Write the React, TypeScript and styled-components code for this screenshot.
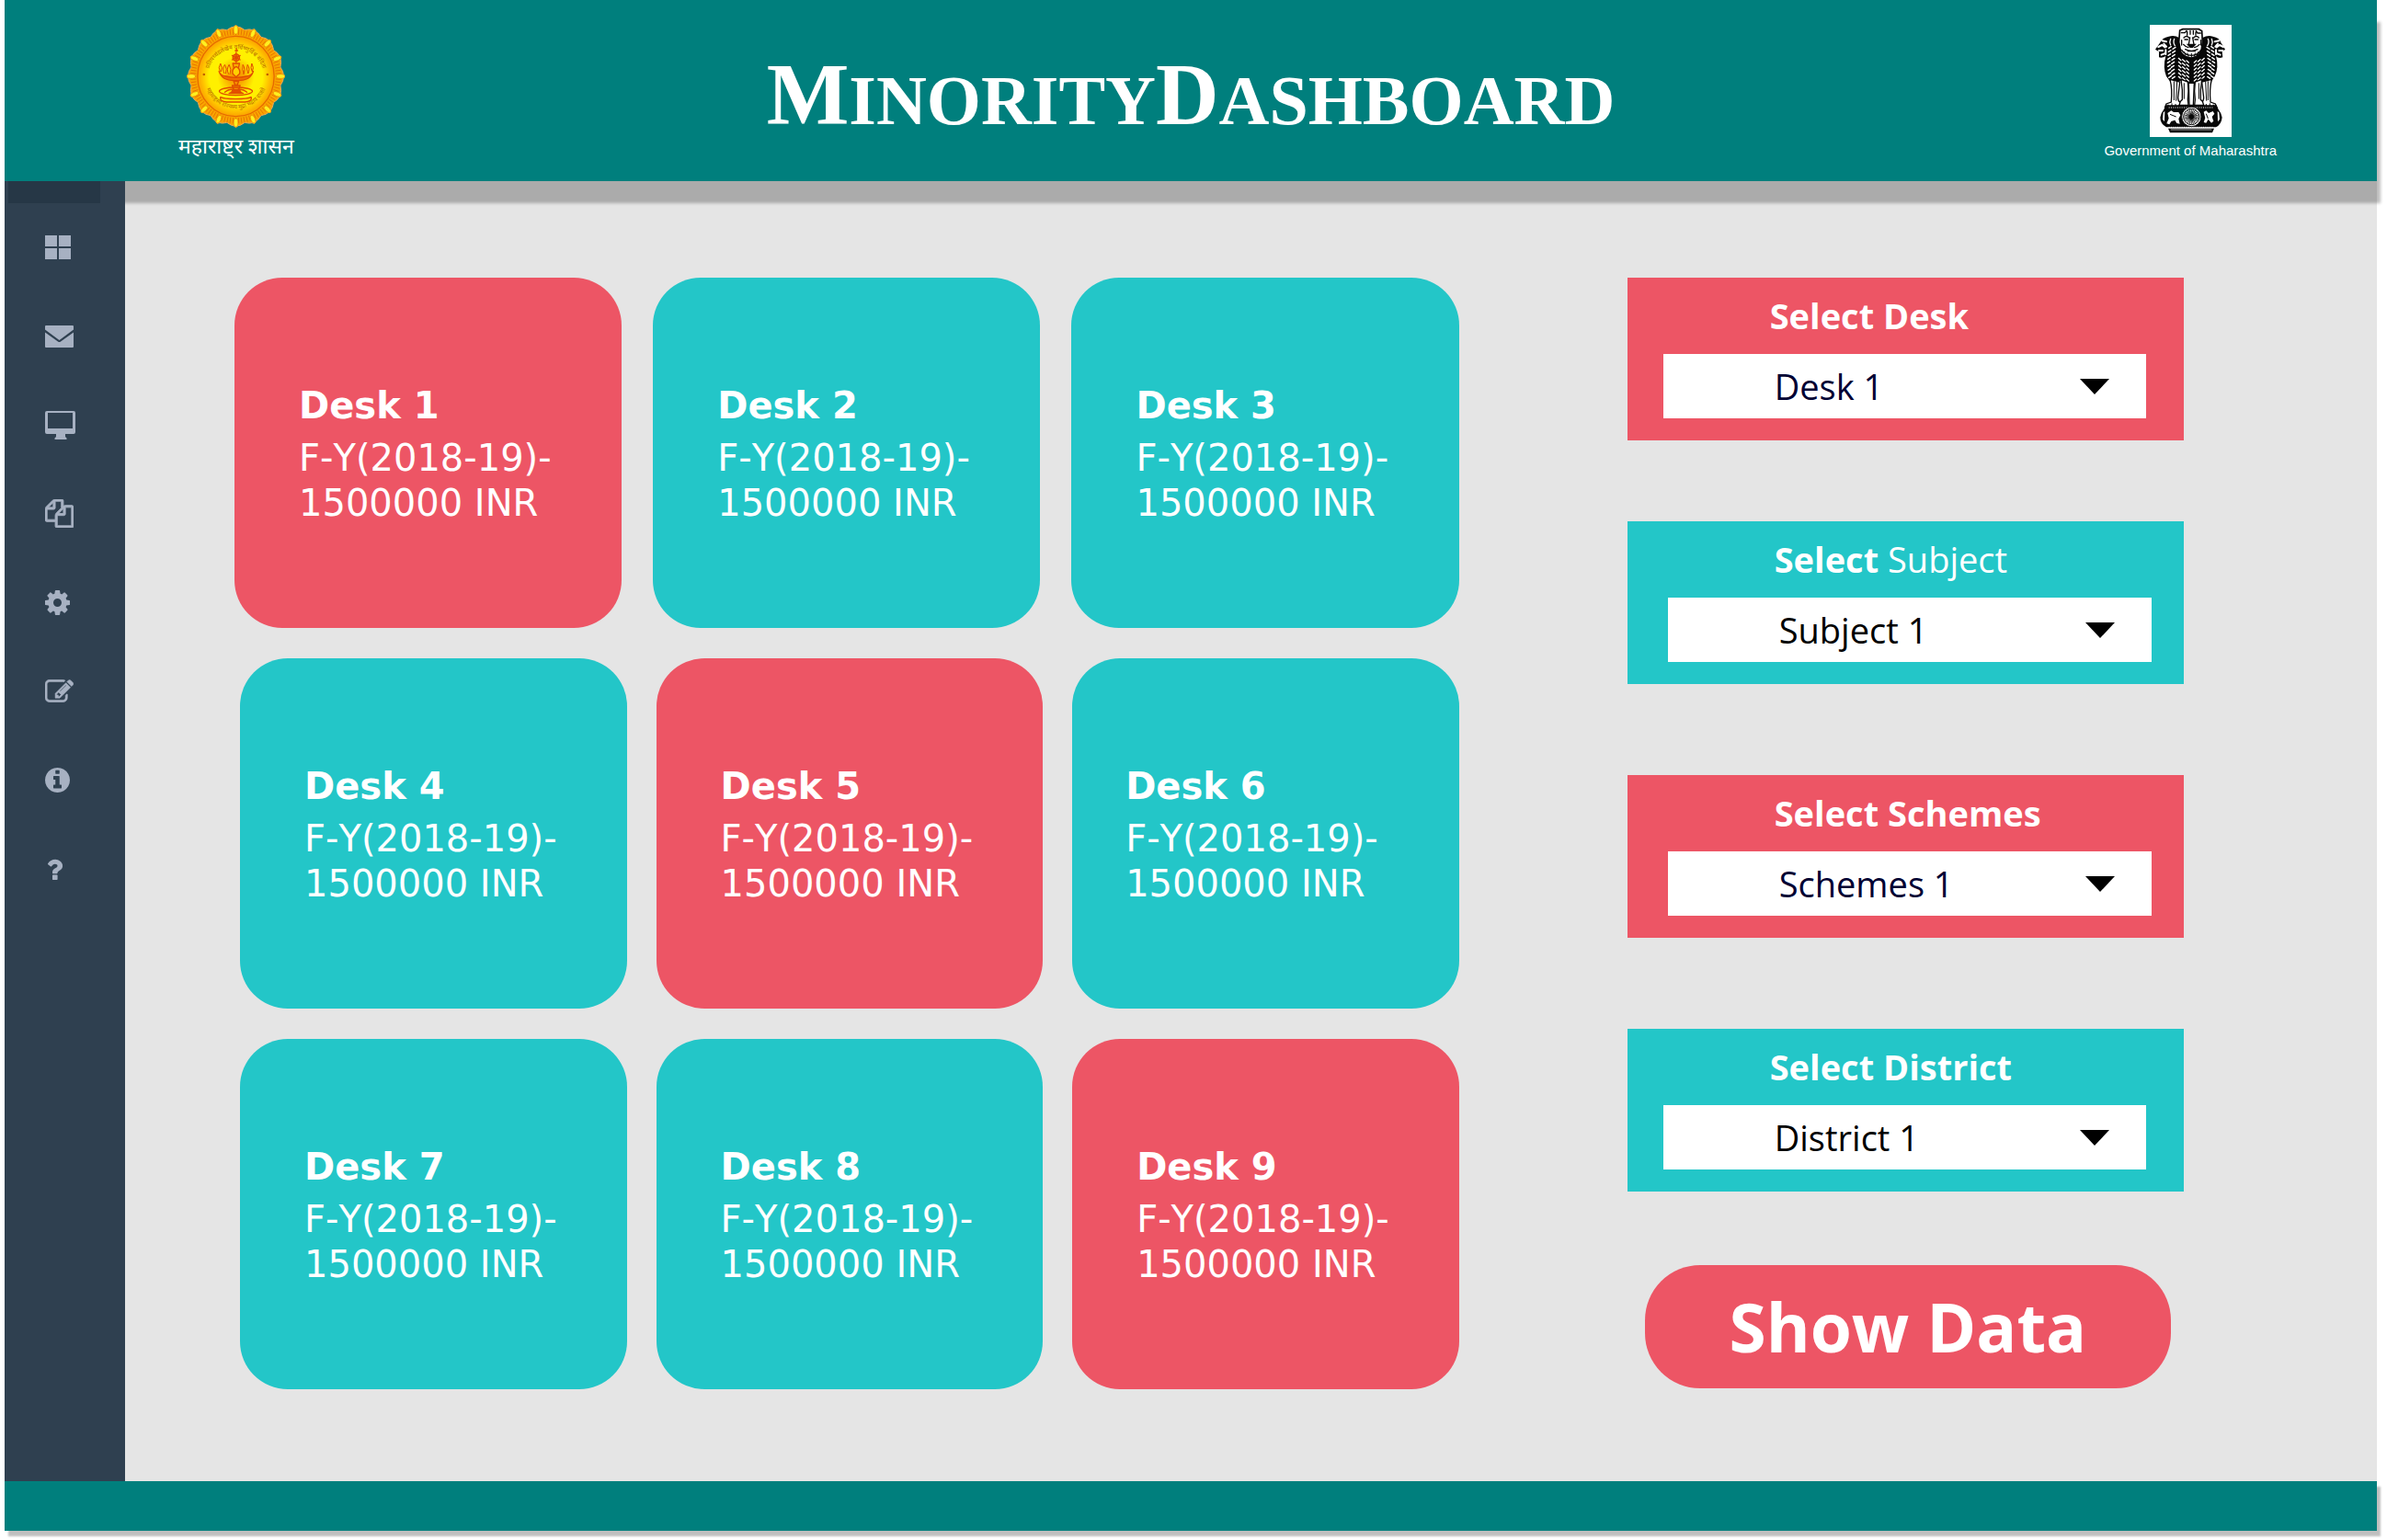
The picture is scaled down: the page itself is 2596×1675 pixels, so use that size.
import React from "react";
import styled, { createGlobalStyle, css } from "styled-components";

const color = {
  teal: "#007f7d",
  navy: "#2f4050",
  navyDark: "#263746",
  coral: "#ed5565",
  aqua: "#23c6c8",
  canvas: "#e5e5e5",
  icon: "#a7b1c2",
};

const humanist = `"Open Sans", "Noto Sans", sans-serif`;

const GlobalStyle = createGlobalStyle`
  *, *::before, *::after { box-sizing: border-box; }
  body { margin: 0; background: #fff; font-family: ${humanist}; }
  h1, h2, p, ul, figure { margin: 0; padding: 0; }
  button, select { font: inherit; border: 0; border-radius: 0; cursor: pointer; }
`;

const Page = styled.div`
  display: grid;
  grid-template-columns: auto minmax(0, 1fr);
  grid-template-rows: auto 1fr auto;
  min-height: 100vh;
  padding: 0 11px 10px 5px;
`;

const Header = styled.header`
  grid-column: 1 / -1;
  position: relative;
  z-index: 1;
  display: grid;
  grid-template-columns: 1fr auto 1fr;
  align-items: start;
  min-height: 197px;
  padding: 27px 109px 0 189px;
  background: ${color.teal};
  box-shadow: 4px 24px 3px rgba(0, 0, 0, 0.25);
  color: #fff;
`;

const Brand = styled.figure<{ $end?: boolean }>`
  display: flex;
  flex-direction: column;
  align-items: center;
  justify-self: ${(p) => (p.$end ? "end" : "start")};
  svg { display: block; }
`;

const MarathiName = styled.figcaption`
  font: 23px/36px "Noto Sans Devanagari", "Noto Sans", "Lohit Devanagari", sans-serif;
  margin-top: 4px;
`;

const StateName = styled.figcaption`
  font: 15px/30px "Liberation Sans", Arial, sans-serif;
`;

const Title = styled.h1`
  /* the two outer columns differ in padding, so the title is pulled to the page's centre */
  margin-right: 80px;
  padding-top: 20px;
  font: bold 76px/112px "Liberation Serif", serif;
  text-transform: uppercase;
  white-space: nowrap;
`;

const TitleWord = styled.span`
  display: inline-block;
  &::first-letter { font-size: 95px; }
`;

const Sidebar = styled.nav`
  position: relative;
  z-index: 2;
  width: 131px;
  background: ${color.navy};
`;

const SidebarCap = styled.div`
  width: 100px;
  height: 24px;
  margin-left: 4px;
  background: ${color.navyDark};
`;

const NavList = styled.ul`
  display: grid;
  grid-auto-rows: 1fr;
  height: 772px;
  list-style: none;
`;

const NavButton = styled.button`
  display: flex;
  align-items: center;
  width: 100%;
  height: 100%;
  padding: 0 0 0 44px;
  background: transparent;
  color: ${color.icon};
`;

const Main = styled.main`
  display: grid;
  grid-template-columns: 11fr 5fr;
  align-items: start;
  gap: 183px;
  padding: 105px 210px 100px 119px;
  background: ${color.canvas};
`;

const Board = styled.section`
  display: grid;
  gap: 33px;
`;

const BoardRow = styled.div<{ $inset?: boolean }>`
  display: grid;
  grid-template-columns: repeat(3, 1fr);
  gap: ${(p) => (p.$inset ? 32 : 34)}px;
  padding-left: ${(p) => (p.$inset ? 6 : 0)}px;
`;

type Tone = "coral" | "aqua";

const DeskCard = styled.article<{ $tone: Tone; $indent: number }>`
  min-height: 381px;
  padding: 115px 16px 111px ${(p) => p.$indent}px;
  border-radius: 52px;
  background: ${(p) => color[p.$tone]};
  color: #fff;
  font: 40px/49px "DejaVu Sans", Verdana, sans-serif;
  font-kerning: none;
`;

const DeskName = styled.h2`
  margin-bottom: 8px;
  font-size: 40px;
  font-weight: bold;
`;

const Filters = styled.form`
  display: flex;
  flex-direction: column;
`;

const FilterPanel = styled.div<{ $tone: Tone; $right?: boolean }>`
  margin-top: 99px;
  padding: 15px 41px 24px 39px;
  background: ${(p) => color[p.$tone]};
  ${(p) => p.$right && css`padding-left: 44px; padding-right: 35px;`}
  &:nth-child(1) { margin-top: 0; }
  &:nth-child(2) { margin-top: 88px; }
`;

const FilterLabel = styled.label`
  display: block;
  margin-bottom: 16px;
  padding-left: 116px;
  color: #fff;
  font-size: 38px;
  font-weight: 700;
  line-height: 52px;
`;

const LightWord = styled.span`
  font-weight: 400;
`;

const SelectWrap = styled.div`
  position: relative;
`;

const Select = styled.select<{ $ink: string }>`
  display: block;
  appearance: none;
  width: 100%;
  height: 70px;
  padding: 0 80px 0 121px;
  background: #fff;
  color: ${(p) => p.$ink};
  font-size: 38px;
`;

const Caret = styled.svg`
  position: absolute;
  top: 27px;
  right: 40px;
  pointer-events: none;
`;

const ShowButton = styled.button`
  margin: 80px 14px 0 19px;
  padding: 16px;
  border-radius: 60px;
  background: ${color.coral};
  color: #fff;
  font-size: 73px;
  font-weight: 700;
  line-height: 102px;
`;

const Footer = styled.footer`
  grid-column: 1 / -1;
  position: relative;
  z-index: 3;
  height: 54px;
  background: ${color.teal};
  box-shadow: 4px 6px 2px rgba(0, 0, 0, 0.25);
`;

const polar = (r: number, deg: number) => {
  const a = (deg * Math.PI) / 180;
  return [160 + r * Math.sin(a), 168 - r * 1.04 * Math.cos(a)];
};

function scallop() {
  const pts: string[] = [];
  for (let i = 0; i < 128; i++) {
    const k = i % 8;
    const r = [160, 155, 154, 151, 148, 151, 154, 155][k];
    pts.push(polar(r, i * 2.8125).map((n) => n.toFixed(1)).join(","));
  }
  return pts.join(" ");
}

function Seal() {
  const petals = Array.from({ length: 16 }, (_, i) => i * 22.5);
  const rays = Array.from({ length: 96 }, (_, i) => i * 3.75);
  return (
    <svg width="107" height="112" viewBox="0 0 320 336" role="img" aria-label="Seal of Maharashtra">
      <defs>
        <radialGradient id="disc">
          <stop offset="0" stopColor="#f08a00" />
          <stop offset="0.2" stopColor="#f9a800" />
          <stop offset="0.48" stopColor="#fff000" />
          <stop offset="0.7" stopColor="#fff000" />
          <stop offset="0.86" stopColor="#ffc400" />
          <stop offset="1" stopColor="#fba100" />
        </radialGradient>
        <path id="arcTop" d="M68 190 A93 97 0 1 1 252 190" />
        <path id="arcBottom" d="M56 180 A105 109 0 0 0 264 180" />
      </defs>
      <polygon points={scallop()} fill="#f9a400" stroke="#e8a860" strokeWidth="3" />
      {rays.map((d) => {
        const [x1, y1] = polar(130, d);
        const [x2, y2] = polar(148, d);
        return <line key={d} x1={x1} y1={y1} x2={x2} y2={y2} stroke="#e56a00" strokeWidth="2.4" />;
      })}
      {petals.map((d) => {
        const [x, y] = polar(146, d);
        return (
          <ellipse key={d} cx={x} cy={y} rx="7" ry="14" fill="#ffef20" stroke="#ea8a00" strokeWidth="2"
            transform={`rotate(${d} ${x} ${y})`} />
        );
      })}
      <ellipse cx="160" cy="168" rx="125" ry="131" fill="url(#disc)" stroke="#e66a00" strokeWidth="4" />
      <g fill="#b86a00" fontSize="19" fontFamily='"Noto Sans Devanagari", "Noto Sans", sans-serif'>
        <text><textPath href="#arcTop" startOffset="50%" textAnchor="middle">प्रतिपच्चंद्रलेखेव वर्धिष्णुर्विश्व वंदिता</textPath></text>
        <text><textPath href="#arcBottom" startOffset="50%" textAnchor="middle">महाराष्ट्रस्य राज्यस्य मुद्रा भद्राय राजते</textPath></text>
      </g>
      <circle cx="56" cy="162" r="4" fill="#c06000" />
      <circle cx="263" cy="162" r="4" fill="#c06000" />
      <g fill="none" stroke="#e04e00" strokeWidth="4" strokeLinecap="round" strokeLinejoin="round">
        <path d="M162 78v8m-4-2h8" />
        <circle cx="161" cy="107" r="11" fill="#f08000" />
        <circle cx="161" cy="107" r="4" fill="#ffe000" />
        <path d="M148 100l26 14M148 114l26-14M161 90v34" />
        <path d="M150 126h22l-4 16h-14z" fill="#f9b000" />
        <path d="M105 152q10 32 56 30q46 2 56-30q-6 14-24 16q-32 8-64 0q-18-2-24-16z" fill="#f07000" />
        <path d="M108 152q-7-12 2-26q8 14 2 26M122 158q-8-14 2-28q9 14 3 28M136 160q-8-15 2-30q9 15 3 30M186 160q-7-15-3-30q10 15 2 30M200 158q-7-14-2-28q10 14 2 28M213 152q-7-12-1-26q9 14 2 26" fill="#ffd800" strokeWidth="3" />
        <path d="M150 160q-4-16 11-24q15 8 11 24l-11 10z" fill="#ffd000" />
        <path d="M153 184h16l-4 12h-8zM148 198h26l-5 14h-16z" fill="#f59000" />
        <path d="M150 212q-2 8-12 12h46q-10-4-12-12" fill="#e45000" />
        <ellipse cx="160" cy="217" rx="54" ry="13" />
        <path d="M124 220q12-10 28-10M196 220q-12-10-28-10" />
        <path d="M110 236q-4 14 20 16h60q24-2 20-16q-12 6-50 6t-50-6z" fill="#ffe000" />
      </g>
    </svg>
  );
}

function Emblem() {
  const rows = Array.from({ length: 9 }, (_, i) => 76 + i * 12);
  const spokes = Array.from({ length: 24 }, (_, i) => i * 15);
  return (
    <svg width="89" height="122" viewBox="0 0 267 366" role="img" aria-label="State Emblem of India">
      <rect width="267" height="366" fill="#fff" />
      {/* manes and shoulders */}
      <path d="M62 38q18-6 34 4l76 0q18-10 34-4q22 4 26 20l14 22-10 8 2 18q-14 6-22-4q10 36-4 66l-14 22q-16 4-30-8l-20 8-14 12-14-12-20-8q-14 12-30 8l-16-22q-12-30-2-66q-12 8-22 4v-18l-12-8 16-22q6-16 28-20z" fill="#080808" />
      <g stroke="#fff" strokeWidth="4" fill="none" strokeLinecap="round">
        {rows.map((y, i) => (
          <React.Fragment key={y}>
            {i > 2 && <path d={`M94 ${y - 3}l8 7M107 ${y + 1}l8 7M120 ${y + 5}l7 6M178 ${y - 3}l-8 7M165 ${y + 1}l-8 7M152 ${y + 5}l-7 6`} />}
            <path d={`M${58 + Math.abs(i - 4)} ${y}l8-5M${70 + Math.abs(i - 5)} ${y + 3}l9-6M${212 - Math.abs(i - 4)} ${y}l-8-5M${200 - Math.abs(i - 5)} ${y + 3}l-9-6`} />
          </React.Fragment>
        ))}
        <path d="M68 46q-5 10 0 20M80 46q-5 12 2 22M202 46q5 10 0 20M190 46q5 12-2 22" />
      </g>
      {/* side faces */}
      <g fill="none" stroke="#fff" strokeWidth="6" strokeLinecap="round">
        <path d="M40 52l14 3M28 72l12-6 10 7M30 84h12M46 62l8 9M38 98l10-4M52 82v14" />
        <path d="M226 52l-14 3M240 72l-12-6-10 7M238 84h-12M222 62l-8 9M230 98l-10-4M216 82v14" />
      </g>
      {/* front face */}
      <path d="M98 18l10-4h52l10 6 2 36-4 30q-10 20-33 22q-24-2-34-20l-6-32z" fill="#fff" stroke="#080808" strokeWidth="5" />
      <g fill="none" stroke="#080808" strokeWidth="4" strokeLinecap="round">
        <path d="M103 26h12l5-7M166 27h-10l-5-7M122 22v12M132 19v12M142 19v12M150 24v10" />
        <path d="M111 42q9-9 17 0M143 42q9-9 17 0M114 48h10M147 48h10M131 42l-4 22M140 42l4 22" />
        <path d="M124 64h24l-8 9h-8z" fill="#080808" />
        <path d="M110 64q7 8 16 10M162 64q-7 8-16 10M116 80q20 10 40 0M124 86h24M104 82q10 17 32 18q22-1 31-18M104 50v16M167 50v16" />
        <path d="M112 88l5 10M123 93l3 10M136 94v11M148 93l-3 10M159 88l-5 10" strokeWidth="3" />
      </g>
      {/* legs */}
      <g fill="#fff" stroke="#080808" strokeWidth="4">
        <path d="M66 178q8 30 4 74l-16 6-4 10h48l2-14q-8-4-8-16l6-52z" />
        <path d="M202 178q-8 30-4 74l16 6 4 10h-48l-2-14q8-4 8-16l-6-52z" />
        <path d="M102 178l22 8q4 30 0 58l2 18h-30l4-12 6-6q2-30-4-66z" />
        <path d="M170 178l-22 8q-4 30 0 58l-2 18h30l-4-12-6-6q-2-30 4-66z" />
        <path d="M127 190h18l-3 72h-13z" />
      </g>
      <path d="M79 184v62M89 184l-3 64M112 190v52M160 190v52M190 184v62M182 184l3 64M60 260v8M72 256v12M84 258v10M208 260v8M196 256v12M184 258v10" stroke="#080808" strokeWidth="3" />
      {/* abacus */}
      <path d="M52 262h166l6 14q10 12 12 26q-2 22-20 32H54q-20-12-20-32q2-14 12-26z" fill="#080808" />
      <path d="M62 270h146M62 334h146" stroke="#fff" strokeWidth="3" strokeDasharray="3 4" />
      <g fill="#fff">
        <path d="M58 288l12-8 8 5h16l6 10-6 12 4 16-10-2-6-10-12 4-6 10-9-3 7-17z" />
        <path d="M176 284l8-4 8 8 14-6 5 8-8 10 5 14-7 6-10-12-7 12-8-2 5-14z" />
        <path d="M44 286l5-4-1 34-6-8zM226 286l-5-4 1 34 6-8z" />
      </g>
      <path d="M66 292l20 8M184 290l6 16" stroke="#080808" strokeWidth="3" />
      <circle cx="136" cy="300" r="32" fill="#fff" stroke="#080808" strokeWidth="3" />
      <circle cx="136" cy="300" r="26" fill="none" stroke="#080808" strokeWidth="3" />
      {spokes.map((d) => (
        <line key={d} x1="136" y1="294" x2="136" y2="276" stroke="#080808" strokeWidth="2.4" transform={`rotate(${d} 136 300)`} />
      ))}
      <circle cx="136" cy="300" r="8" fill="#080808" />
      <path d="M60 338h150l-6 14H66z" fill="#080808" />
      <path d="M68 342h134" stroke="#fff" strokeWidth="2" />
    </svg>
  );
}

type Glyph = { name: string; w: number; h: number; box: string; d: string; bold?: number };

const glyphs: Glyph[] = [
  { name: "Dashboard", w: 29, h: 26, box: "0 0 29 26", d: "M0 0h13v12H0zM15 0h13v12H15zM0 14h13v12H0zM15 14h13v12H15z" },
  { name: "Messages", w: 31, h: 24, box: "0 0 31 24", d: "M1 0h29q1 0 1 1v3.500L15.500 16 0 4.500V1q0-1 1-1zM0 7.500L14 17.500q1.500 1 3 0L31 7.500V23q0 1-1 1H1q-1 0-1-1z" },
  { name: "Monitor", w: 33, h: 31, box: "0 0 33 31", d: "M2 0h29q2 0 2 2v21q0 2-2 2H22v3l1.500 1.500V31h-13v-1.500L12 28v-3H2q-2 0-2-2V2q0-2 2-2zM3 2v17h27V2z" },
  { name: "Documents", w: 31, h: 31, box: "0 0 1792 1792", bold: 50, d: "M1696 384q40 0 68 28t28 68v1216q0 40-28 68t-68 28h-960q-40 0-68-28t-28-68v-288h-544q-40 0-68-28t-28-68v-672q0-40 20-88t48-76l408-408q28-28 76-48t88-20h416q40 0 68 28t28 68v328q68-40 128-40h416zm-544 213l-299 299h299v-299zm-640-384l-299 299h299v-299zm196 647l316-316v-416h-384v416q0 40-28 68t-68 28h-416v640h512v-256q0-40 20-88t48-76zm956 804v-1152h-384v416q0 40-28 68t-68 28h-416v640h896z" },
  { name: "Settings", w: 27, h: 27, box: "128 128 1536 1536", d: "M1152 896q0-106-75-181t-181-75-181 75-75 181 75 181 181 75 181-75 75-181zm512-109v222q0 12-8 23t-20 13l-185 28q-19 54-39 91 35 50 107 138 10 12 10 25t-9 23q-27 37-99 108t-94 71q-12 0-26-9l-138-108q-44 23-91 38-16 136-29 186-7 28-36 28h-222q-14 0-24.500-8.500t-11.500-21.500l-28-184q-49-16-90-37l-141 107q-10 9-25 9-14 0-25-11-126-114-165-168-7-10-7-23 0-12 8-23 15-21 51-66.500t54-70.500q-27-50-41-99l-183-27q-13-2-21-12.500t-8-23.500v-222q0-12 8-23t19-13l186-28q14-46 39-92-40-57-107-138-10-12-10-24 0-10 9-23 26-36 98.500-107.500t94.500-71.500q13 0 26 10l138 107q44-23 91-38 16-136 29-186 7-28 36-28h222q14 0 24.500 8.500t11.500 21.500l28 184q49 16 90 37l142-107q9-9 24-9 13 0 25 10 129 119 165 170 7 8 7 22 0 12-8 23-15 21-51 66.500t-54 70.500q26 50 41 98l183 28q13 2 21 12.500t8 23.500z" },
  { name: "Edit", w: 31, h: 25, box: "0 128 1792 1408", bold: 30, d: "M888 1184l116-116-152-152-116 116v56h96v96h56zm440-720q-16-16-33 1l-350 350q-17 17-1 33t33-1l350-350q17-17 1-33zm80 594v190q0 119-84.500 203.500t-203.500 84.500h-832q-119 0-203.500-84.500t-84.500-203.500v-832q0-119 84.500-203.500t203.500-84.500h832q63 0 117 25 15 7 18 23 3 17-9 29l-49 49q-14 14-32 8-23-6-45-6h-832q-66 0-113 47t-47 113v832q0 66 47 113t113 47h832q66 0 113-47t47-113v-126q0-13 9-22l64-64q15-15 35-7t20 29zm-96-738l288 288-672 672h-288v-288zm444 132l-92 92-288-288 92-92q28-28 68-28t68 28l152 152q28 28 28 68t-28 68z" },
  { name: "Information", w: 27, h: 27, box: "128 128 1536 1536", d: "M1152 1376v-160q0-14-9-23t-23-9h-96v-512q0-14-9-23t-23-9h-320q-14 0-23 9t-9 23v160q0 14 9 23t23 9h96v320h-96q-14 0-23 9t-9 23v160q0 14 9 23t23 9h448q14 0 23-9t9-23zm-128-896v-160q0-14-9-23t-23-9h-192q-14 0-23 9t-9 23v160q0 14 9 23t23 9h192q14 0 23-9t9-23zm640 416q0 209-103 385.500t-279.500 279.500-385.500 103-385.500-103-279.500-279.500-103-385.500 103-385.500 279.500-279.500 385.500-103 385.500 103 279.500 279.500 103 385.500z" },
  { name: "Help", w: 20, h: 24, box: "310 160 1146 1376", d: "M1088 1256v240q0 16-12 28t-28 12h-240q-16 0-28-12t-12-28v-240q0-16 12-28t28-12h240q16 0 28 12t12 28zm316-600q0 54-15.500 101t-35 76.500-55 59.500-57.500 43.500-61 35.500q-41 23-68.500 65t-27.500 67q0 17-12 32.500t-28 15.500h-240q-15 0-25.500-18.500t-10.500-37.500v-45q0-83 65-156.500t143-108.500q59-27 84-56t25-76q0-42-46.500-74t-107.500-32q-65 0-108 29-35 25-107 115-13 16-31 16-12 0-25-8l-164-125q-13-10-15.500-25t5.500-28q160-266 464-266 80 0 161 31t146 83 106 127.500 41 158.500z" },
];

type Desk = { name: string; tone: Tone; indent?: number };

const deskRows: Desk[][] = [
  [{ name: "Desk 1", tone: "coral" }, { name: "Desk 2", tone: "aqua" }, { name: "Desk 3", tone: "aqua" }],
  [{ name: "Desk 4", tone: "aqua" }, { name: "Desk 5", tone: "coral" }, { name: "Desk 6", tone: "aqua", indent: 58 }],
  [{ name: "Desk 7", tone: "aqua" }, { name: "Desk 8", tone: "aqua" }, { name: "Desk 9", tone: "coral" }],
];

type Filter = { noun: string; tone: Tone; ink: string; light?: boolean; right?: boolean };

const filters: Filter[] = [
  { noun: "Desk", tone: "coral", ink: "#000033" },
  { noun: "Subject", tone: "aqua", ink: "#000", light: true, right: true },
  { noun: "Schemes", tone: "coral", ink: "#000033", right: true },
  { noun: "District", tone: "aqua", ink: "#000" },
];

export default function App() {
  return (
    <>
      <GlobalStyle />
      <Page>
        <Header>
          <Brand>
            <Seal />
            <MarathiName lang="mr">महाराष्ट्र शासन</MarathiName>
          </Brand>
          <Title>
            <TitleWord>Minority</TitleWord>
            <TitleWord>Dashboard</TitleWord>
          </Title>
          <Brand $end>
            <Emblem />
            <StateName>Government of Maharashtra</StateName>
          </Brand>
        </Header>

        <Sidebar aria-label="Main">
          <SidebarCap />
          <NavList>
            {glyphs.map((g) => (
              <li key={g.name}>
                <NavButton type="button" aria-label={g.name}>
                  <svg width={g.w} height={g.h} viewBox={g.box} fill="currentColor" stroke={g.bold ? "currentColor" : "none"} strokeWidth={g.bold} fillRule={g.name === "Monitor" ? "evenodd" : "nonzero"} aria-hidden="true">
                    <path d={g.d} />
                  </svg>
                </NavButton>
              </li>
            ))}
          </NavList>
        </Sidebar>

        <Main>
          <Board aria-label="Desks">
            {deskRows.map((row, i) => (
              <BoardRow key={i} $inset={i > 0}>
                {row.map((d) => (
                  <DeskCard key={d.name} $tone={d.tone} $indent={d.indent ?? 70}>
                    <DeskName>{d.name}</DeskName>
                    <p>F-Y(2018-19)-<br />1500000 INR</p>
                  </DeskCard>
                ))}
              </BoardRow>
            ))}
          </Board>

          <Filters onSubmit={(e) => e.preventDefault()}>
            {filters.map((f) => (
              <FilterPanel key={f.noun} $tone={f.tone} $right={f.right}>
                <FilterLabel htmlFor={f.noun}>
                  Select {f.light ? <LightWord>{f.noun}</LightWord> : f.noun}
                </FilterLabel>
                <SelectWrap>
                  <Select id={f.noun} $ink={f.ink}>
                    <option>{f.noun} 1</option>
                  </Select>
                  <Caret width="32" height="17" viewBox="0 0 32 17" aria-hidden="true">
                    <path d="M0 0h32L16 17z" />
                  </Caret>
                </SelectWrap>
              </FilterPanel>
            ))}
            <ShowButton type="submit">Show Data</ShowButton>
          </Filters>
        </Main>

        <Footer />
      </Page>
    </>
  );
}
